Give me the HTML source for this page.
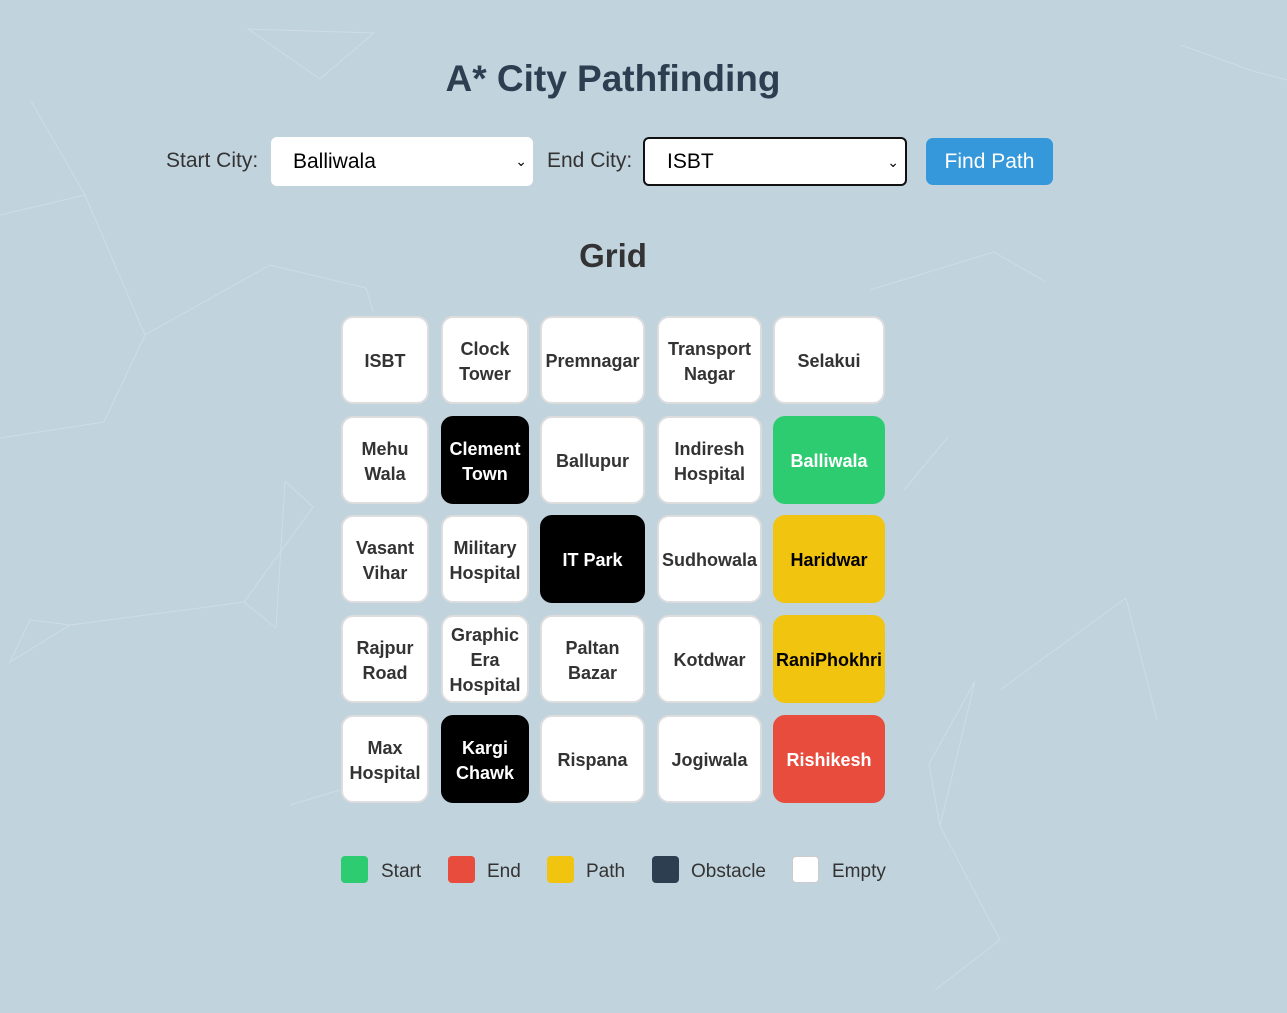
<!DOCTYPE html>
<html><head><meta charset="utf-8"><style>
body{margin:0;width:1287px;height:1013px;background:#c1d3dd;font-family:"Liberation Sans","DejaVu Sans",sans-serif;position:relative;overflow:hidden}
.a{position:absolute}
h1{position:absolute;top:58px;left:0;width:1226px;text-align:center;margin:0;font-size:37px;color:#2c3e50;font-weight:bold}
.lbl{font-size:21px;color:#333;top:149px}
.sel{background:#fff;border-radius:6px;font-size:21px;color:#000;box-sizing:border-box;padding-left:22px;line-height:49px}
.sel span{position:absolute;right:6px;top:0;font-size:14px}
.c{position:absolute;background:#fff;border:2px solid #ddd;border-radius:12px;box-sizing:border-box;display:flex;align-items:center;justify-content:center;text-align:center;font-weight:bold;font-size:18px;line-height:25px;color:#333;padding-top:3px}
.k{background:#000;color:#fff;border-color:#000}
.g{background:#2ecc71;color:#fff;border-color:#2ecc71}
.y{background:#f1c40f;color:#000;border-color:#f1c40f}
.r{background:#e74c3c;color:#fff;border-color:#e74c3c}
.lg{position:absolute;top:856px;width:27px;height:27px;border-radius:4px}
.lt{position:absolute;top:861px;font-size:19px;color:#333}
</style></head><body>
<svg class="a" style="left:0;top:0" width="1287" height="1013" stroke="#dde7ec" stroke-width="1" fill="none" opacity=".5">
<path d="M248 29L320 79L374 33ZM31 101L85 195L145 335L104 422L0 438M0 215L85 195M270 265L366 288L373 311M145 335L270 265M1181 45L1253 71L1287 80M994 252L1044 281M994 252L870 290M285 481L313 507L244 602L200 608L70 625L10 662L30 620L70 625M244 602L276 628M285 481L276 628M904 490L948 437M975 681L929 764L940 826L1000 940L935 990M975 681L940 826M1126 598L1157 720M1126 598L1000 690M290 805L340 790"/>
</svg>
<h1>A* City Pathfinding</h1>
<div class="a lbl" style="left:166px">Start City:</div>
<div class="a sel" style="left:271px;top:137px;width:262px;height:49px">Balliwala<span>&#8964;</span></div>
<div class="a lbl" style="left:547px">End City:</div>
<div class="a sel" style="left:643px;top:137px;width:264px;height:49px;border:2px solid #111;line-height:46px">ISBT<span>&#8964;</span></div>
<div class="a" style="left:926px;top:138px;width:127px;height:47px;background:#3498db;border-radius:7px;color:#fff;font-size:21px;line-height:47px;text-align:center">Find Path</div>
<div class="a" style="left:0;top:237px;width:1226px;text-align:center;font-size:33px;font-weight:bold;color:#333">Grid</div>

<div class="c" style="left:341px;top:316px;width:88px;height:88px">ISBT</div>
<div class="c" style="left:441px;top:316px;width:88px;height:88px">Clock<br>Tower</div>
<div class="c" style="left:540px;top:316px;width:105px;height:88px">Premnagar</div>
<div class="c" style="left:657px;top:316px;width:105px;height:88px">Transport<br>Nagar</div>
<div class="c" style="left:773px;top:316px;width:112px;height:88px">Selakui</div>

<div class="c" style="left:341px;top:416px;width:88px;height:88px">Mehu<br>Wala</div>
<div class="c k" style="left:441px;top:416px;width:88px;height:88px">Clement<br>Town</div>
<div class="c" style="left:540px;top:416px;width:105px;height:88px">Ballupur</div>
<div class="c" style="left:657px;top:416px;width:105px;height:88px">Indiresh<br>Hospital</div>
<div class="c g" style="left:773px;top:416px;width:112px;height:88px">Balliwala</div>

<div class="c" style="left:341px;top:515px;width:88px;height:88px">Vasant<br>Vihar</div>
<div class="c" style="left:441px;top:515px;width:88px;height:88px">Military<br>Hospital</div>
<div class="c k" style="left:540px;top:515px;width:105px;height:88px">IT Park</div>
<div class="c" style="left:657px;top:515px;width:105px;height:88px">Sudhowala</div>
<div class="c y" style="left:773px;top:515px;width:112px;height:88px">Haridwar</div>

<div class="c" style="left:341px;top:615px;width:88px;height:88px">Rajpur<br>Road</div>
<div class="c" style="left:441px;top:615px;width:88px;height:88px">Graphic<br>Era<br>Hospital</div>
<div class="c" style="left:540px;top:615px;width:105px;height:88px">Paltan<br>Bazar</div>
<div class="c" style="left:657px;top:615px;width:105px;height:88px">Kotdwar</div>
<div class="c y" style="left:773px;top:615px;width:112px;height:88px">RaniPhokhri</div>

<div class="c" style="left:341px;top:715px;width:88px;height:88px">Max<br>Hospital</div>
<div class="c k" style="left:441px;top:715px;width:88px;height:88px">Kargi<br>Chawk</div>
<div class="c" style="left:540px;top:715px;width:105px;height:88px">Rispana</div>
<div class="c" style="left:657px;top:715px;width:105px;height:88px">Jogiwala</div>
<div class="c r" style="left:773px;top:715px;width:112px;height:88px">Rishikesh</div>

<div class="lg" style="left:341px;background:#2ecc71"></div><div class="lt" style="left:381px">Start</div>
<div class="lg" style="left:448px;background:#e74c3c"></div><div class="lt" style="left:487px">End</div>
<div class="lg" style="left:547px;background:#f1c40f"></div><div class="lt" style="left:586px">Path</div>
<div class="lg" style="left:652px;background:#2c3e50"></div><div class="lt" style="left:691px">Obstacle</div>
<div class="lg" style="left:792px;background:#fff;border:1px solid #ccc;box-sizing:border-box"></div><div class="lt" style="left:832px">Empty</div>
</body></html>
